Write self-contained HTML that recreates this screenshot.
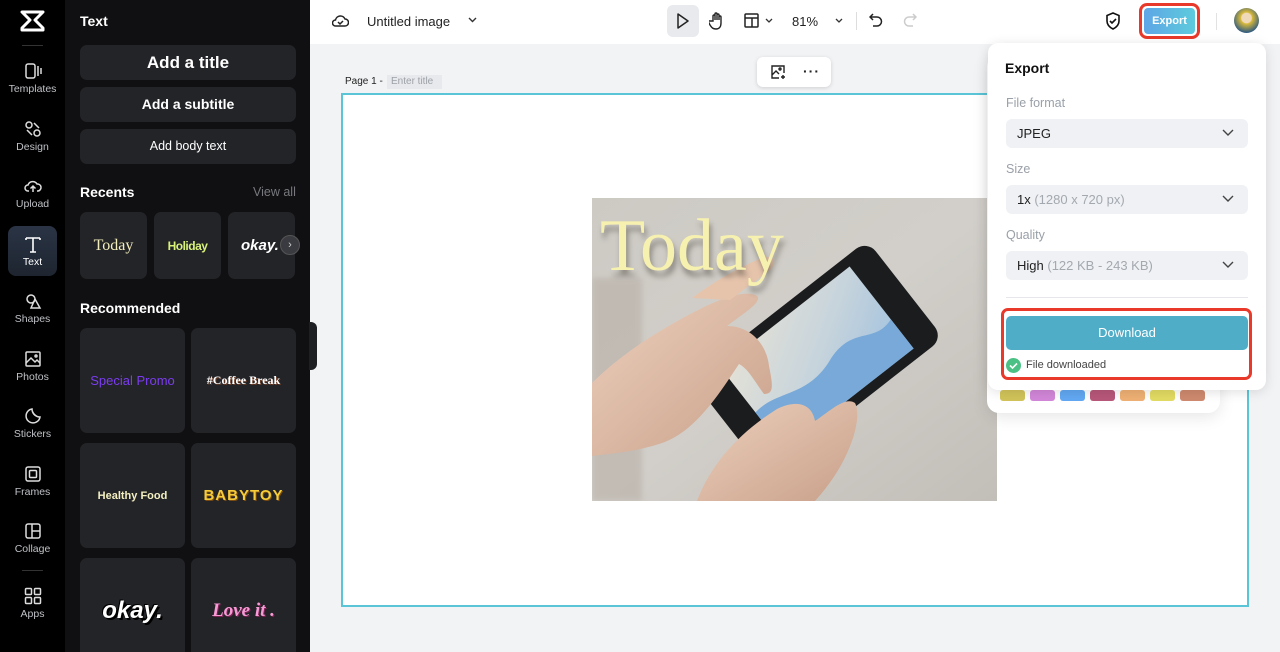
<!DOCTYPE html>
<html style="width:1280px;height:652px;overflow:hidden"><head><meta charset="utf-8">
<style>
*{box-sizing:border-box;margin:0;padding:0}
body{width:1280px;height:652px;overflow:hidden;font-family:"Liberation Sans",sans-serif;background:#f2f3f5;position:relative}
.rail{position:absolute;left:0;top:0;width:65px;height:652px;background:#000}
.ri{position:absolute;left:8px;width:49px;height:50px;text-align:center;color:#bfc1c6;font-size:10.5px}
.ri svg{display:block;margin:0 auto 3px}
.panel{position:absolute;left:65px;top:0;width:245px;height:652px;background:#101012;overflow:hidden}
.btn{position:absolute;left:15px;width:216px;background:#232428;border-radius:7px;color:#fff;text-align:center;font-weight:bold}
.h{position:absolute;left:15px;color:#fff;font-weight:bold;font-size:14px}
.card{position:absolute;background:#232428;border-radius:7px;display:flex;align-items:center;justify-content:center;font-weight:bold}
.top{position:absolute;left:310px;top:0;width:970px;height:44px;background:#fff}
.sel{position:absolute;left:1006px;width:242px;height:29px;background:#eff1f4;border-radius:6px;font-size:13px;color:#222;padding:7px 0 0 11px}
.sel .c{position:absolute;right:14px;top:6px}
.lbl{position:absolute;left:1006px;font-size:12.5px;color:#9aa0a8}
</style></head><body>
<div class="rail">
 <svg style="position:absolute;left:20px;top:10px" width="25" height="22" viewBox="0 0 25 22"><path d="M2 2h21l-8 8 8 8v2H2v-2l8-8-8-8z" fill="none" stroke="#fff" stroke-width="3" stroke-linejoin="round"/></svg>
 <div style="position:absolute;left:22px;top:45px;width:21px;height:1px;background:#333"></div>
 <div class="ri" style="top:62px"><svg width="18" height="18" viewBox="0 0 18 18" fill="none" stroke="#ddd" stroke-width="1.5"><rect x="2" y="2" width="9" height="14" rx="2"/><path d="M14 4v10M17 6v6"/></svg>Templates</div>
 <div class="ri" style="top:120px"><svg width="18" height="18" viewBox="0 0 18 18" fill="none" stroke="#ddd" stroke-width="1.5"><circle cx="5" cy="5" r="3"/><circle cx="13" cy="13" r="3"/><path d="M10 3l5 5M3 10l5 5"/></svg>Design</div>
 <div class="ri" style="top:177px"><svg width="18" height="18" viewBox="0 0 18 18" fill="none" stroke="#ddd" stroke-width="1.5"><path d="M5 14H4a3 3 0 010-6 5 5 0 019-1 3.5 3.5 0 011 7h-1M9 15V9M6.5 11.5L9 9l2.5 2.5"/></svg>Upload</div>
 <div class="ri" style="top:226px;height:50px;background:linear-gradient(#2a3445,#1e2530);border-radius:8px;color:#fff;padding-top:9px"><svg width="18" height="18" viewBox="0 0 18 18" fill="none" stroke="#fff" stroke-width="1.6"><path d="M2 3h14M9 3v14M2 3v2M16 3v2M6 17h6"/></svg>Text</div>
 <div class="ri" style="top:292px"><svg width="18" height="18" viewBox="0 0 18 18" fill="none" stroke="#ddd" stroke-width="1.5"><circle cx="7" cy="7" r="4"/><path d="M11 7l5 9H7z"/></svg>Shapes</div>
 <div class="ri" style="top:350px"><svg width="18" height="18" viewBox="0 0 18 18" fill="none" stroke="#ddd" stroke-width="1.5"><rect x="2" y="2" width="14" height="14" rx="1"/><path d="M2 13l5-5 4 4 2-2 3 3"/><circle cx="12" cy="6" r="1"/></svg>Photos</div>
 <div class="ri" style="top:407px"><svg width="18" height="18" viewBox="0 0 18 18" fill="none" stroke="#ddd" stroke-width="1.5"><path d="M16 10A7 7 0 118 2c0 4 3 8 8 8zM8 2c0 4 4 8 8 8"/></svg>Stickers</div>
 <div class="ri" style="top:465px"><svg width="18" height="18" viewBox="0 0 18 18" fill="none" stroke="#ddd" stroke-width="1.5"><rect x="2" y="2" width="14" height="14" rx="2"/><rect x="5.5" y="5.5" width="7" height="7" rx="1"/></svg>Frames</div>
 <div class="ri" style="top:522px"><svg width="18" height="18" viewBox="0 0 18 18" fill="none" stroke="#ddd" stroke-width="1.5"><rect x="2" y="2" width="14" height="14" rx="2"/><path d="M8 2v14M8 9h8"/></svg>Collage</div>
 <div style="position:absolute;left:22px;top:570px;width:21px;height:1px;background:#333"></div>
 <div class="ri" style="top:587px"><svg width="18" height="18" viewBox="0 0 18 18" fill="none" stroke="#ddd" stroke-width="1.5"><rect x="1.5" y="1.5" width="6" height="6" rx="1"/><rect x="10.5" y="1.5" width="6" height="6" rx="1"/><rect x="1.5" y="10.5" width="6" height="6" rx="1"/><rect x="10.5" y="10.5" width="6" height="6" rx="1"/></svg>Apps</div>
</div>
<div class="panel">
 <div class="h" style="top:13px">Text</div>
 <div class="btn" style="top:45px;height:35px;line-height:35px;font-size:17px">Add a title</div>
 <div class="btn" style="top:87px;height:35px;line-height:35px;font-size:14px">Add a subtitle</div>
 <div class="btn" style="top:129px;height:35px;line-height:35px;font-size:12.5px;font-weight:normal">Add body text</div>
 <div class="h" style="top:184px">Recents</div>
 <div style="position:absolute;left:188px;top:185px;color:#77797e;font-size:12.5px">View all</div>
 <div class="card" style="left:15px;top:212px;width:67px;height:67px;color:#f3eebc;font-family:'Liberation Serif',serif;font-weight:normal;font-size:16px">Today</div>
 <div class="card" style="left:89px;top:212px;width:67px;height:67px;color:#d8f27a;font-size:12px;letter-spacing:-.5px">Holiday</div>
 <div class="card" style="left:163px;top:212px;width:67px;height:67px;color:#fff;font-style:italic;font-size:15px;justify-content:flex-start;padding-left:13px;overflow:hidden">okay.</div>
 <div style="position:absolute;left:215px;top:235px;width:20px;height:20px;border-radius:50%;background:#3a3b40;border:1px solid #555;color:#ccc;font-size:11px;text-align:center;line-height:18px">›</div>
 <div class="h" style="top:300px">Recommended</div>
 <div class="card" style="left:15px;top:328px;width:105px;height:105px;color:#7b3cf0;font-size:13px;font-weight:normal">Special Promo</div>
 <div class="card" style="left:126px;top:328px;width:105px;height:105px;color:#fff;font-family:'Liberation Serif',serif;font-size:12px;text-shadow:1px 1px #6b3b25">#Coffee Break</div>
 <div class="card" style="left:15px;top:443px;width:105px;height:105px;color:#f3efc0;font-size:11px">Healthy Food</div>
 <div class="card" style="left:126px;top:443px;width:105px;height:105px;color:#f5cc3a;font-size:15px;letter-spacing:1px;text-shadow:1px 1px #7a4a10">BABYTOY</div>
 <div class="card" style="left:15px;top:558px;width:105px;height:105px;color:#fff;font-size:24px;font-style:italic;text-shadow:2px 2px #000,-1px -1px #000">okay.</div>
 <div class="card" style="left:126px;top:558px;width:105px;height:105px;color:#f79ad6;font-family:'Liberation Serif',serif;font-size:19px;font-style:italic;text-shadow:1px 1px #7a2252">Love it .</div>
</div>
<div style="position:absolute;left:309px;top:322px;width:8px;height:48px;background:#1e1f22;border-radius:0 6px 6px 0"></div>
<div class="top">
 <svg style="position:absolute;left:22px;top:13px" width="17" height="15" viewBox="0 0 17 15" fill="none" stroke="#222" stroke-width="1.5"><path d="M4 13H3.5a3 3 0 010-6 5 5 0 019.5-1A3.5 3.5 0 0113 13z"/><path d="M6 9l2 2 3-3"/></svg>
 <div style="position:absolute;left:57px;top:14px;font-size:13px;color:#222">Untitled image</div>
 <svg style="position:absolute;left:158px;top:17px" width="9" height="6" viewBox="0 0 9 6" fill="none" stroke="#333" stroke-width="1.4"><path d="M1 1l3.5 3.5L8 1"/></svg>
 <div style="position:absolute;left:357px;top:5px;width:32px;height:32px;background:#e8eaed;border-radius:6px"></div>
 <svg style="position:absolute;left:366px;top:13px" width="14" height="16" viewBox="0 0 14 16" fill="none" stroke="#222" stroke-width="1.5"><path d="M2 1l10 7-10 7z" stroke-linejoin="round"/></svg>
 <svg style="position:absolute;left:399px;top:12px" width="16" height="18" viewBox="0 0 16 18" fill="none" stroke="#222" stroke-width="1.4"><path d="M4 9V4a1 1 0 012 0v4V2a1 1 0 012 0v6V3a1 1 0 012 0v5-3a1 1 0 012 0v6c0 4-2 6-5 6s-4-1-6-4l-1.5-3a1 1 0 011.5-1z"/></svg>
 <svg style="position:absolute;left:434px;top:13px" width="15" height="15" viewBox="0 0 15 15" fill="none" stroke="#222" stroke-width="1.5"><rect x="1" y="1" width="13" height="13" rx="1"/><path d="M1 5h13M8 5v9"/></svg>
 <svg style="position:absolute;left:455px;top:18px" width="8" height="5" viewBox="0 0 8 5" fill="none" stroke="#333" stroke-width="1.3"><path d="M1 1l3 3 3-3"/></svg>
 <div style="position:absolute;left:482px;top:14px;font-size:13px;color:#222">81%</div>
 <svg style="position:absolute;left:525px;top:18px" width="8" height="5" viewBox="0 0 8 5" fill="none" stroke="#333" stroke-width="1.3"><path d="M1 1l3 3 3-3"/></svg>
 <div style="position:absolute;left:546px;top:12px;width:1px;height:18px;background:#ddd"></div>
 <svg style="position:absolute;left:559px;top:13px" width="14" height="15" viewBox="0 0 14 15" fill="none" stroke="#222" stroke-width="1.5"><path d="M4 1L1 4l3 3M1 4h7a4.5 4.5 0 010 9H4"/></svg>
 <svg style="position:absolute;left:593px;top:13px" width="14" height="15" viewBox="0 0 14 15" fill="none" stroke="#ccc" stroke-width="1.5"><path d="M10 1l3 3-3 3M13 4H6a4.5 4.5 0 000 9h4"/></svg>
 <svg style="position:absolute;left:795px;top:12px" width="16" height="18" viewBox="0 0 16 18" fill="none" stroke="#111" stroke-width="1.6"><path d="M8 1l6 2.5V9c0 4-3 6.5-6 8-3-1.5-6-4-6-8V3.5z"/><path d="M5 9l2 2 4-4"/></svg>
 <div style="position:absolute;left:829px;top:3px;width:61px;height:36px;border:3px solid #e8392a;border-radius:8px;padding:2px"><div style="width:100%;height:100%;border-radius:4px;background:linear-gradient(90deg,#5ea6e6,#5dcbdc);color:#fff;font-size:11px;font-weight:bold;text-align:center;line-height:26px">Export</div></div>
 <div style="position:absolute;left:906px;top:13px;width:1px;height:17px;background:#e2e2e2"></div>
 <div style="position:absolute;left:924px;top:8px;width:25px;height:25px;border-radius:50%;background:radial-gradient(circle at 50% 40%,#f0d9b8 0 25%,#d8b93a 30%,#2f5a80 75%)"></div>
</div>
<div style="position:absolute;left:345px;top:76px;font-size:10px;color:#222">Page 1 -</div>
<div style="position:absolute;left:387px;top:75px;width:55px;height:14px;background:#e8e9ec;font-size:10px;color:#9da1a8;padding:1px 0 0 4px">Enter title</div>
<div style="position:absolute;left:757px;top:57px;width:74px;height:30px;background:#fff;border-radius:6px;box-shadow:0 1px 4px rgba(0,0,0,.15)">
 <svg style="position:absolute;left:13px;top:7px" width="16" height="16" viewBox="0 0 16 16" fill="none" stroke="#222" stroke-width="1.4"><path d="M9 14H2V2h12v7M2 11l4-4 3 3"/><circle cx="10" cy="5" r="1"/><path d="M13 11v4M11 13h4"/></svg>
 <div style="position:absolute;left:46px;top:6px;font-size:14px;color:#222;letter-spacing:1px;font-weight:bold">···</div>
</div>
<div style="position:absolute;left:341px;top:93px;width:908px;height:514px;background:#fff;border:2px solid #5bc5d8"></div>
<svg style="position:absolute;left:592px;top:198px" width="405" height="303" viewBox="0 0 405 303">
 <defs><linearGradient id="bg" x1="0" y1="0" x2="1" y2="1"><stop offset="0" stop-color="#cdcac4"/><stop offset=".5" stop-color="#d2cfca"/><stop offset="1" stop-color="#c2beb8"/></linearGradient>
 <linearGradient id="sk" x1="0" y1="0" x2="1" y2="1"><stop offset="0" stop-color="#ecd0bc"/><stop offset="1" stop-color="#c9a08a"/></linearGradient>
 <linearGradient id="sc" x1="0" y1="0" x2="1" y2="1"><stop offset="0" stop-color="#e6e2d6"/><stop offset=".5" stop-color="#c7d4dc"/><stop offset="1" stop-color="#9cbfdf"/></linearGradient>
 <filter id="bl"><feGaussianBlur stdDeviation="3"/></filter></defs>
 <rect width="405" height="303" fill="url(#bg)"/>
 <rect x="0" y="80" width="50" height="223" fill="#b3aaa0" opacity=".5" filter="url(#bl)"/>
 <g transform="translate(225,160) rotate(-38)"><rect x="-112" y="-62" width="224" height="124" rx="14" fill="#1b1c1e"/><rect x="-82" y="-52" width="164" height="104" fill="url(#sc)"/><path d="M-82 5c30-5 50 20 90 5s45 15 74 5v37h-164z" fill="#78a9d8"/></g>
 <path d="M0 185c30-30 70-55 110-75 25-12 45-18 55-12 5 6-10 15-30 30 25 0 40 20 42 40 4 20 5 28-5 28-8-10-15-25-25-30-20 30-45 70-80 80-25 8-50 10-67 12z" fill="url(#sk)"/>
 <path d="M100 100c20-15 45-30 70-40 12-4 16 4 8 12l-40 30z" fill="#e6c4ac"/>
 <path d="M105 303c15-40 45-70 80-92 20-10 35-5 38 12 15-10 30-25 40-18 8 15-5 60-40 98z" fill="url(#sk)"/>
 <text x="10" y="78" font-family="Liberation Serif,serif" font-size="74" fill="#4e4a40" opacity=".55" filter="url(#bl)">Today</text>
 <text x="8" y="72" font-family="Liberation Serif,serif" font-size="74" fill="#f7f1b0">Today</text>
</svg>
<div style="position:absolute;left:987px;top:55px;width:233px;height:358px;background:#fff;border-radius:12px;box-shadow:0 4px 16px rgba(0,0,0,.1)"></div>
<div style="position:absolute;left:1000px;top:390px;width:25px;height:11px;border-radius:3px;background:#d2c45a"></div>
<div style="position:absolute;left:1030px;top:390px;width:25px;height:11px;border-radius:3px;background:#d387d9"></div>
<div style="position:absolute;left:1060px;top:390px;width:25px;height:11px;border-radius:3px;background:#62a8f3"></div>
<div style="position:absolute;left:1090px;top:390px;width:25px;height:11px;border-radius:3px;background:#b8577a"></div>
<div style="position:absolute;left:1120px;top:390px;width:25px;height:11px;border-radius:3px;background:#efb174"></div>
<div style="position:absolute;left:1150px;top:390px;width:25px;height:11px;border-radius:3px;background:#e3dc63"></div>
<div style="position:absolute;left:1180px;top:390px;width:25px;height:11px;border-radius:3px;background:#cf8a6f"></div>
<div style="position:absolute;left:988px;top:43px;width:278px;height:347px;background:#fff;border-radius:10px;box-shadow:0 2px 12px rgba(0,0,0,.12)"></div>
<div style="position:absolute;left:1005px;top:60px;font-size:14px;font-weight:bold;color:#111">Export</div>
<div class="lbl" style="top:96px">File format</div>
<div class="sel" style="top:119px">JPEG<svg class="c" width="12" height="16" viewBox="0 0 12 16" fill="none" stroke="#444" stroke-width="1.4"><path d="M1 5l5 5 5-5"/></svg></div>
<div class="lbl" style="top:162px">Size</div>
<div class="sel" style="top:185px">1x <span style="color:#a4a9b0">(1280 x 720 px)</span><svg class="c" width="12" height="16" viewBox="0 0 12 16" fill="none" stroke="#444" stroke-width="1.4"><path d="M1 5l5 5 5-5"/></svg></div>
<div class="lbl" style="top:228px">Quality</div>
<div class="sel" style="top:251px">High <span style="color:#a4a9b0">(122 KB - 243 KB)</span><svg class="c" width="12" height="16" viewBox="0 0 12 16" fill="none" stroke="#444" stroke-width="1.4"><path d="M1 5l5 5 5-5"/></svg></div>
<div style="position:absolute;left:1006px;top:297px;width:242px;height:1px;background:#e6e7ea"></div>
<div style="position:absolute;left:1001px;top:308px;width:251px;height:72px;border:3px solid #e8392a;border-radius:7px"></div>
<div style="position:absolute;left:1006px;top:316px;width:242px;height:34px;background:#4fadc8;border-radius:5px;color:#fff;font-size:13px;text-align:center;line-height:34px">Download</div>
<div style="position:absolute;left:1006px;top:358px;width:15px;height:15px;border-radius:50%;background:#4cc185"><svg width="15" height="15" viewBox="0 0 15 15" fill="none" stroke="#fff" stroke-width="1.6"><path d="M4 7.5l2.5 2.5 4.5-4.5"/></svg></div>
<div style="position:absolute;left:1026px;top:359px;font-size:11px;color:#444">File downloaded</div>
</body></html>
